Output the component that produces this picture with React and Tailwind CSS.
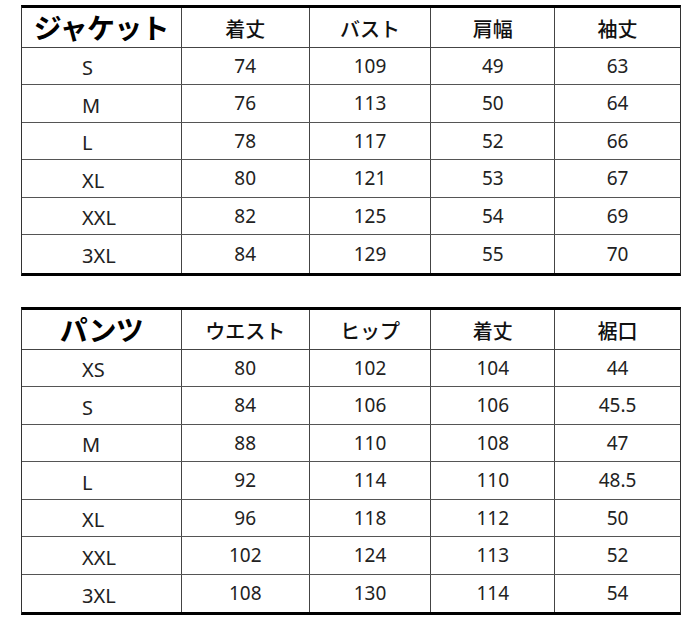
const jacket = {
  title: 'ジャケット',
  cols: ['着丈', 'バスト', '肩幅', '袖丈'],
  rows: [
    ['S', '74', '109', '49', '63'],
    ['M', '76', '113', '50', '64'],
    ['L', '78', '117', '52', '66'],
    ['XL', '80', '121', '53', '67'],
    ['XXL', '82', '125', '54', '69'],
    ['3XL', '84', '129', '55', '70'],
  ],
};

const pants = {
  title: 'パンツ',
  cols: ['ウエスト', 'ヒップ', '着丈', '裾口'],
  rows: [
    ['XS', '80', '102', '104', '44'],
    ['S', '84', '106', '106', '45.5'],
    ['M', '88', '110', '108', '47'],
    ['L', '92', '114', '110', '48.5'],
    ['XL', '96', '118', '112', '50'],
    ['XXL', '102', '124', '113', '52'],
    ['3XL', '108', '130', '114', '54'],
  ],
};

const widths = ['w-[160px]', 'w-[128px]', 'w-[122px]', 'w-[124px]', 'w-[125px]'];

function SizeTable({ data }) {
  return (
    <div className="w-[660px] border-t-[3px] border-b-[3px] border-x border-t-black border-b-black border-x-[#333]">
      <div className="flex h-[40px] border-b border-[#444]">
        <div className={`${widths[0]} flex items-center justify-center border-r border-[#444] text-[28px] font-bold text-black tracking-tight`}>
          {data.title}
        </div>
        {data.cols.map((c, i) => (
          <div
            key={c}
            className={`${widths[i + 1]} flex items-center justify-center pt-1 text-[20px] font-medium text-[#111] ${i < 3 ? 'border-r border-[#444]' : ''}`}
          >
            {c}
          </div>
        ))}
      </div>
      {data.rows.map((r, ri) => (
        <div
          key={r[0]}
          className={`flex ${ri % 2 === 0 ? 'h-[37px]' : 'h-[38px]'} ${ri < data.rows.length - 1 ? 'border-b border-[#555]' : ''}`}
        >
          <div className={`${widths[0]} flex items-center pl-[60px] pt-1 border-r border-[#444] text-[20px] text-[#222]`}>
            {r[0]}
          </div>
          {r.slice(1).map((v, i) => (
            <div
              key={i}
              className={`${widths[i + 1]} flex items-center justify-center text-[19px] text-[#222] ${i < 3 ? 'border-r border-[#444]' : ''}`}
            >
              {v}
            </div>
          ))}
        </div>
      ))}
    </div>
  );
}

export default function App() {
  return (
    <div
      className="w-[700px] h-[619px] bg-white pt-[5px] pl-[21px] flex flex-col gap-[31px]"
      style={{ fontFamily: '"Noto Sans", "Noto Sans CJK JP", sans-serif' }}
    >
      <SizeTable data={jacket} />
      <SizeTable data={pants} />
    </div>
  );
}
